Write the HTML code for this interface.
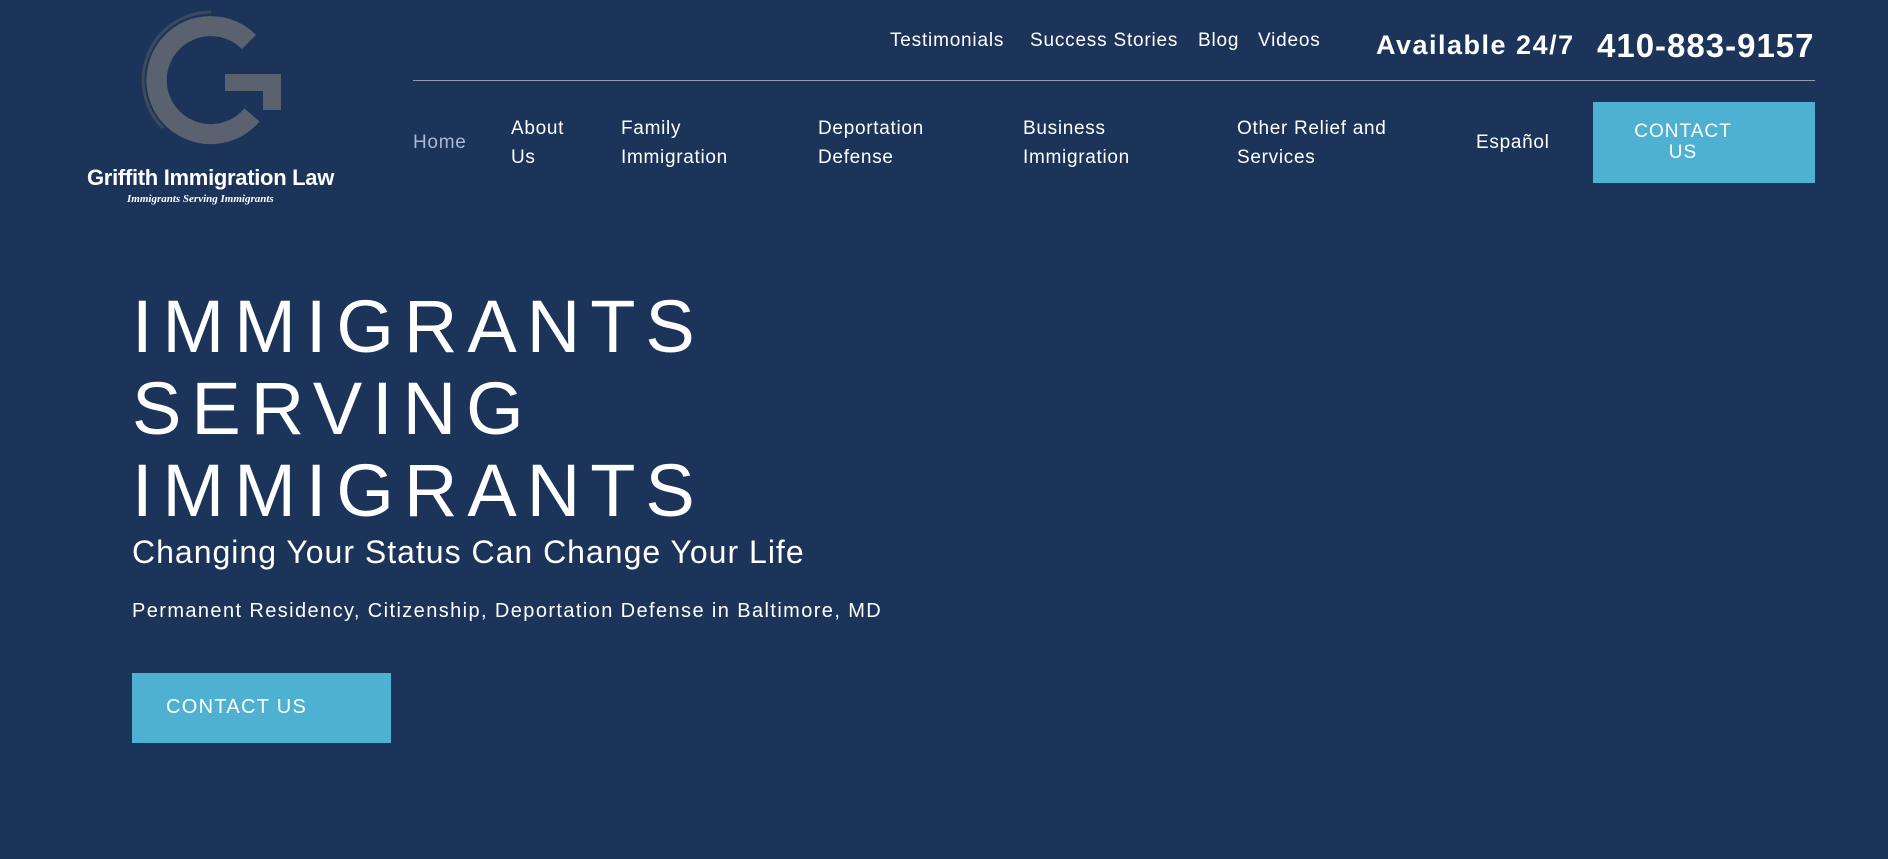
<!DOCTYPE html>
<html><head><meta charset="utf-8"><style>
*{margin:0;padding:0;box-sizing:border-box}
body{width:1888px;height:859px;background:#1c3459;font-family:"Liberation Sans",sans-serif;color:#fff;position:relative;overflow:hidden}
.a{position:absolute;white-space:nowrap}
.top{font-size:19px;top:30px;letter-spacing:0.8px}
.nav{font-size:19px;line-height:29px;top:114px;letter-spacing:0.7px}
.btn{background:#4eb1d1;position:absolute}
</style></head><body>
<svg class="a" style="left:135px;top:4px" width="160" height="150" viewBox="0 0 160 150">
<path d="M76 8 A68 68 0 0 0 28 124" fill="none" stroke="#3e4a5c" stroke-width="3"/>
<path d="M65 15 A62 62 0 0 0 40 127" fill="none" stroke="#55606f" stroke-width="4"/>
<path d="M114 38 A54 54 0 1 0 117 111" fill="none" stroke="#5a6270" stroke-width="20"/>
<rect x="90" y="70" width="56" height="17" fill="#5a6270"/>
<rect x="128" y="70" width="18" height="36" fill="#5a6270"/>
</svg>
<div class="a" style="left:87px;top:165px;font-size:22px;font-weight:bold;letter-spacing:-0.3px">Griffith Immigration Law</div>
<div class="a" style="left:127px;top:193px;font-size:11px;font-style:italic;font-weight:bold;font-family:'Liberation Serif',serif">Immigrants Serving Immigrants</div>

<div class="a top" style="left:890px">Testimonials</div>
<div class="a top" style="left:1030px">Success Stories</div>
<div class="a top" style="left:1198px">Blog</div>
<div class="a top" style="left:1258px">Videos</div>
<div class="a" style="left:1376px;top:30px;font-size:27px;font-weight:bold;letter-spacing:1.5px">Available 24/7</div>
<div class="a" style="left:1597px;top:27px;font-size:33px;font-weight:bold;letter-spacing:1px">410-883-9157</div>
<div class="a" style="left:413px;top:80px;width:1402px;height:1px;background:#8f9cb2"></div>

<div class="a nav" style="left:413px;top:128px;color:#a9b8d6">Home</div>
<div class="a nav" style="left:511px">About<br>Us</div>
<div class="a nav" style="left:621px">Family<br>Immigration</div>
<div class="a nav" style="left:818px">Deportation<br>Defense</div>
<div class="a nav" style="left:1023px">Business<br>Immigration</div>
<div class="a nav" style="left:1237px">Other Relief and<br>Services</div>
<div class="a nav" style="left:1476px;top:128px">Español</div>
<div class="btn" style="left:1593px;top:102px;width:222px;height:81px"></div>
<div class="a" style="left:1593px;top:121px;width:180px;text-align:center;font-size:19px;line-height:21px;letter-spacing:1px">CONTACT<br>US</div>

<div class="a" style="left:132px;top:286px;font-size:74px;line-height:82px;letter-spacing:10px">IMMIGRANTS<br>SERVING<br>IMMIGRANTS</div>
<div class="a" style="left:132px;top:534px;font-size:32px;letter-spacing:1px">Changing Your Status Can Change Your Life</div>
<div class="a" style="left:132px;top:600px;font-size:20px;letter-spacing:1.4px">Permanent Residency, Citizenship, Deportation Defense in Baltimore, MD</div>
<div class="btn" style="left:132px;top:673px;width:259px;height:70px"></div>
<div class="a" style="left:166px;top:696px;font-size:20px;letter-spacing:1.3px">CONTACT US</div>
</body></html>
